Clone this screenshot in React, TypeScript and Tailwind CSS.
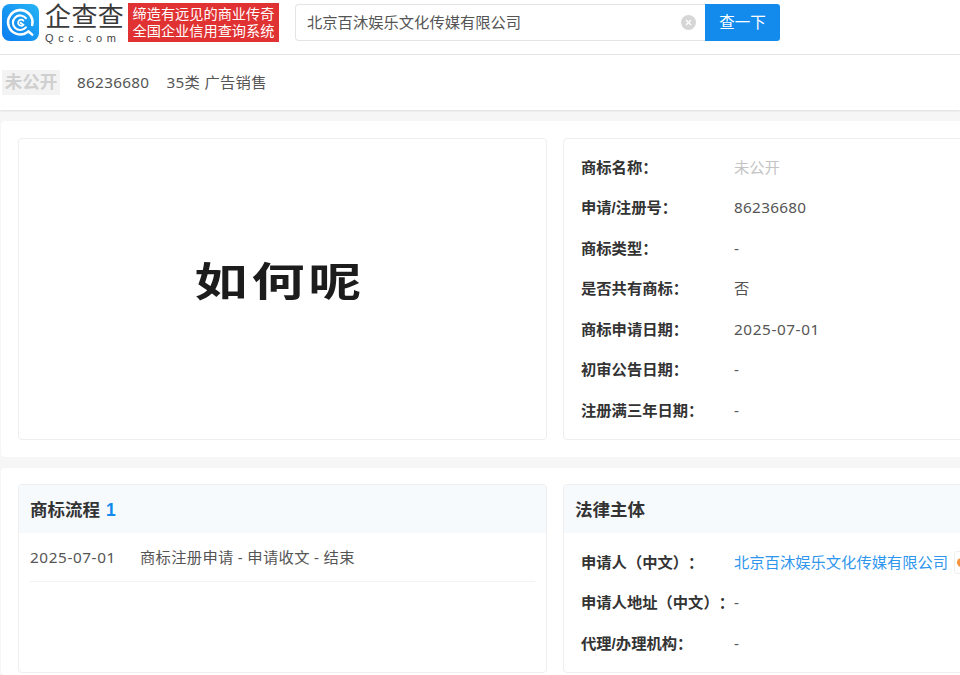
import type { ReactNode } from "react";

const font = "font-['Liberation_Sans','Noto_Sans_CJK_SC',sans-serif]";
const numFont = "font-['Noto_Sans','Noto_Sans_CJK_SC',sans-serif] tracking-[0.3px]";
const dateFont = "font-['Noto_Sans','Noto_Sans_CJK_SC',sans-serif] tracking-[0.6px]";

const markRows: [string, string, string?][] = [
  ["商标名称：", "未公开", "text-[#c4c4c4]"],
  ["申请/注册号：", "86236680", numFont],
  ["商标类型：", "-", numFont],
  ["是否共有商标：", "否"],
  ["商标申请日期：", "2025-07-01", dateFont],
  ["初审公告日期：", "-", numFont],
  ["注册满三年日期：", "-", numFont],
];

// only spots where the rotated word stays inside the page
const marks = [
  [120, 120], [350, 120], [580, 120], [810, 120],
  [10, 270], [240, 270], [470, 270], [700, 270],
  [120, 420], [350, 420], [580, 420], [810, 420],
  [10, 570], [240, 570], [470, 570], [700, 570],
];

function Logo() {
  return (
    <svg width="37" height="37" viewBox="0 0 38 38" className="shrink-0">
      <defs>
        <linearGradient id="qcc" x1="0" y1="1" x2="1" y2="0">
          <stop offset="0" stopColor="#0a7cf0" />
          <stop offset="1" stopColor="#27b4f5" />
        </linearGradient>
      </defs>
      <rect width="38" height="38" rx="8" fill="url(#qcc)" />
      <path d="M26 29 A12.5 12.5 0 1 1 31 21.5" fill="none" stroke="#fff" strokeWidth="2.6" strokeLinecap="round" />
      <path d="M24.5 14.5 A7.5 7.5 0 1 0 24.5 24" fill="none" stroke="#fff" strokeWidth="2.2" strokeLinecap="round" />
      <path d="M22 17 A3.2 3.2 0 1 0 22 21.5 L19 19.3" fill="none" stroke="#fff" strokeWidth="1.8" strokeLinecap="round" />
      <path d="M27 28 L31 31.5" stroke="#fff" strokeWidth="2.6" strokeLinecap="round" />
    </svg>
  );
}

function Row({ label, children }: { label: string; children: ReactNode }) {
  return (
    <div className="flex h-[40.5px] items-center text-[15.3px] leading-none">
      <div className="w-[153px] shrink-0 whitespace-nowrap font-bold text-[#333] [text-spacing-trim:space-all]">{label}</div>
      {children}
    </div>
  );
}

function Watermark() {
  return (
    <svg width="960" height="675" className="pointer-events-none absolute left-0 top-0">
      {marks.map(([x, y]) => (
        <text
          key={`${x}-${y}`}
          x={x}
          y={y}
          fill="#000"
          fillOpacity="0.018"
          fontSize="17"
          letterSpacing="9"
          fontFamily="Liberation Sans"
          transform={`rotate(-42 ${x} ${y})`}
        >
          EEFWYT
        </text>
      ))}
    </svg>
  );
}

export default function App() {
  return (
    <div className={`relative h-[675px] w-[960px] overflow-hidden bg-[#f6f6f6] text-[#555] ${font}`}>
      <header className="flex h-[55px] items-start border-b border-[#e6e6e6] bg-white">
        <div className="ml-[2px] mt-[4px]">
          <Logo />
        </div>
        <div className="ml-[6px] mt-[2px] flex w-[80px] flex-col">
          <span className="text-[26px] font-normal leading-[30px] tracking-[0.4px] text-[#3a3a3a]">企查查</span>
          <span className="mt-[1px] font-['Liberation_Sans',sans-serif] text-[11px] leading-[10px] tracking-[4.6px] text-[#444]">
            Qcc.com
          </span>
        </div>
        <div className="ml-[3px] mt-[3px] flex h-[39px] w-[151px] flex-col items-center justify-center bg-[#e03232] text-[14.2px] leading-[17px] text-white">
          <span className="whitespace-nowrap">缔造有远见的商业传奇</span>
          <span className="whitespace-nowrap">全国企业信用查询系统</span>
        </div>
        <div className="ml-[16px] mt-[4px] flex h-[37px] w-[410px] items-center rounded-l-[4px] border border-r-0 border-[#e4e4e4] bg-white pl-[11px] pr-[9px]">
          <span className="flex-1 pt-[2px] text-[15.3px] text-[#555]">北京百沐娱乐文化传媒有限公司</span>
          <span className="flex h-[15px] w-[15px] items-center justify-center rounded-full bg-[#d6d6d6]">
            <svg width="7" height="7" viewBox="0 0 7 7">
              <path d="M1 1 L6 6 M6 1 L1 6" stroke="#fff" strokeWidth="1.2" />
            </svg>
          </span>
        </div>
        <button className="mt-[4px] h-[37px] w-[75px] rounded-r-[3px] bg-[#128bed] text-[15.5px] text-white">查一下</button>
      </header>

      <div className="flex h-[55px] items-center bg-white pl-[2px] shadow-[0_1px_2px_rgba(0,0,0,0.1)]">
        <span className="flex h-[25px] w-[58px] items-center justify-center bg-[#f3f3f3] text-[17.5px] font-bold text-[#cfcfcf]">未公开</span>
        <span className={`ml-[17px] text-[15.3px] ${numFont}`}>86236680</span>
        <span className={`ml-[17px] text-[15.3px] ${numFont}`}>35类 广告销售</span>
      </div>

      <section className="ml-[1px] mt-[11px] flex h-[336px] gap-[16px] rounded-l-[4px] bg-white pl-[17px] pt-[17px]">
        <div className="flex h-[302px] w-[529px] shrink-0 items-center justify-center rounded-[4px] border border-[#eeeeee] pb-[14px] pr-[5px]">
          <span className="origin-center scale-y-[0.74] text-[53px] font-bold leading-none tracking-[4px] text-[#1c1c1c] blur-[0.5px]">如何呢</span>
        </div>
        <div className="h-[302px] w-[500px] shrink-0 rounded-[4px] border border-[#eeeeee] pl-[17px] pt-[8px]">
          {markRows.map(([label, value, cls]) => (
            <Row key={label} label={label}>
              <span className={cls ?? "text-[#555]"}>{value}</span>
            </Row>
          ))}
        </div>
      </section>

      <section className="ml-[1px] mt-[11px] flex h-[207px] gap-[16px] rounded-l-[4px] bg-white pl-[17px] pt-[16px]">
        <div className="h-[189px] w-[529px] shrink-0 overflow-hidden rounded-[4px] border border-[#eeeeee]">
          <div className="flex h-[48px] items-center bg-[#f6fafd] pl-[11px] pt-[2px] text-[17.5px] font-bold text-[#333]">
            商标流程<span className="ml-[6px] text-[#128bed]">1</span>
          </div>
          <div className="mx-[11px] flex h-[49px] items-center border-b border-[#f3f3f3] pt-[2px] text-[15.3px] leading-none">
            <span className={`w-[110px] shrink-0 ${dateFont}`}>2025-07-01</span>
            <span className={numFont}>商标注册申请 - 申请收文 - 结束</span>
          </div>
        </div>
        <div className="h-[189px] w-[500px] shrink-0 overflow-hidden rounded-[4px] border border-[#eeeeee]">
          <div className="flex h-[48px] items-center bg-[#f6fafd] pl-[11px] pt-[2px] text-[17.5px] font-bold text-[#333]">法律主体</div>
          <div className="pl-[17px] pt-[9px]">
            <Row label="申请人（中文）：">
              <span className="text-[#2f96ee]">北京百沐娱乐文化传媒有限公司</span>
              <span className="ml-[6px] flex h-[23px] w-[20px] shrink-0 items-center rounded-[3px] border border-[#eeeeee] pl-[2px]">
                <span className="h-[9px] w-[9px] rounded-full bg-[#f5923e]" />
              </span>
            </Row>
            <Row label="申请人地址（中文）：">
              <span className={numFont}>-</span>
            </Row>
            <Row label="代理/办理机构：">
              <span className={numFont}>-</span>
            </Row>
          </div>
        </div>
      </section>
      <Watermark />
    </div>
  );
}
